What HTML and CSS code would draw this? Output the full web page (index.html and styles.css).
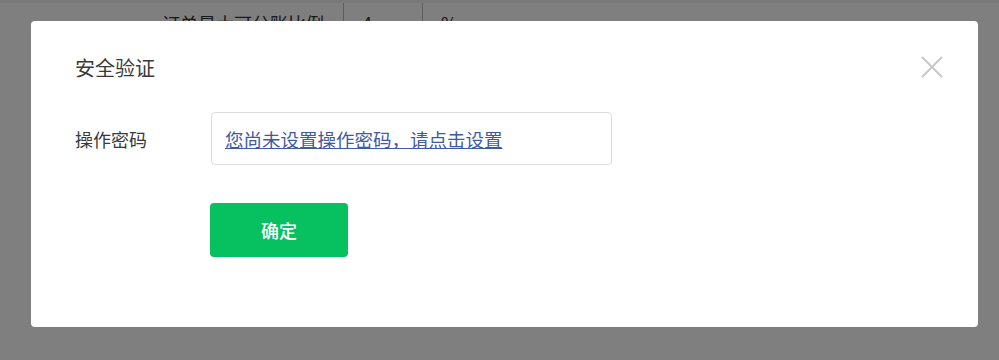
FILE: index.html
```html
<!DOCTYPE html>
<html lang="zh-CN">
<head>
    <meta charset="UTF-8">
    <meta name="viewport" content="width=device-width, initial-scale=1.0">
    <title>安全验证</title>
    <link rel="stylesheet" href="styles.css">
</head>
<body>
    <div class="page">
        <div class="form-row">
            <div class="row-label">订单最大可分账比例</div>
            <div class="row-cell">4</div>
            <div class="row-cell">%</div>
        </div>
    </div>

    <div class="mask">
        <div class="dialog">
            <div class="dialog-head">
                <h2 class="dialog-title">安全验证</h2>
                <button class="dialog-close" aria-label="关闭">
                    <svg width="22" height="22" viewBox="0 0 22 22">
                        <path d="M1 1 L21 21 M21 1 L1 21" stroke="#c8c8c8" stroke-width="2" fill="none"/>
                    </svg>
                </button>
            </div>
            <div class="field">
                <label class="field-label">操作密码</label>
                <div class="field-box">
                    <a class="field-link" href="#">您尚未设置操作密码，请点击设置</a>
                </div>
            </div>
            <div class="actions">
                <button class="btn-primary">确定</button>
            </div>
        </div>
    </div>
</body>
</html>
```

FILE: styles.css
```css
* {
    margin: 0;
    padding: 0;
    box-sizing: border-box;
}

body {
    background: #fff;
    font-family: "Noto Sans CJK SC", "Noto Sans", sans-serif;
    color: #333;
    width: 999px;
    height: 360px;
    overflow: hidden;
}

.page {
    border-top: 3px solid #f2f2f2;
}

.form-row {
    display: flex;
    height: 60px;
    margin-left: 162px;
}

.row-label {
    width: 181px;
    padding-top: 5px;
    font-size: 18px;
    line-height: 30px;
    color: #333;
}

.row-cell {
    width: 79px;
    border-left: 1px solid #bbb;
    padding: 5px 0 0 18px;
    font-size: 18px;
    line-height: 30px;
}

.mask {
    position: fixed;
    inset: 0;
    background: rgba(0, 0, 0, 0.5);
    padding: 21px 21px 0 31px;
}

.dialog {
    background: #fff;
    border-radius: 4px;
    height: 306px;
    padding: 33px 35px 0 44px;
}

.dialog-head {
    display: flex;
    justify-content: space-between;
    align-items: flex-start;
}

.dialog-title {
    font-size: 20px;
    font-weight: normal;
    line-height: 28px;
    color: #3a3a3a;
}

.dialog-close {
    background: none;
    border: none;
    width: 22px;
    height: 22px;
    margin-top: 2px;
    cursor: pointer;
}

.dialog-close svg {
    display: block;
}

.field {
    display: flex;
    align-items: center;
    margin-top: 30px;
}

.field-label {
    width: 136px;
    font-size: 18px;
    color: #3a3a3a;
}

.field-box {
    width: 401px;
    height: 53px;
    border: 1px solid #ddd;
    border-radius: 4px;
    padding-left: 13px;
    display: flex;
    align-items: center;
}

.field-link {
    font-size: 18.5px;
    color: #3f5a9f;
    text-decoration: underline;
}

.actions {
    margin-top: 38px;
    padding-left: 135px;
}

.btn-primary {
    width: 138px;
    height: 54px;
    background: #07c160;
    border: none;
    border-radius: 4px;
    color: #fff;
    font-family: inherit;
    font-size: 18px;
    font-weight: 500;
    cursor: pointer;
}
```
